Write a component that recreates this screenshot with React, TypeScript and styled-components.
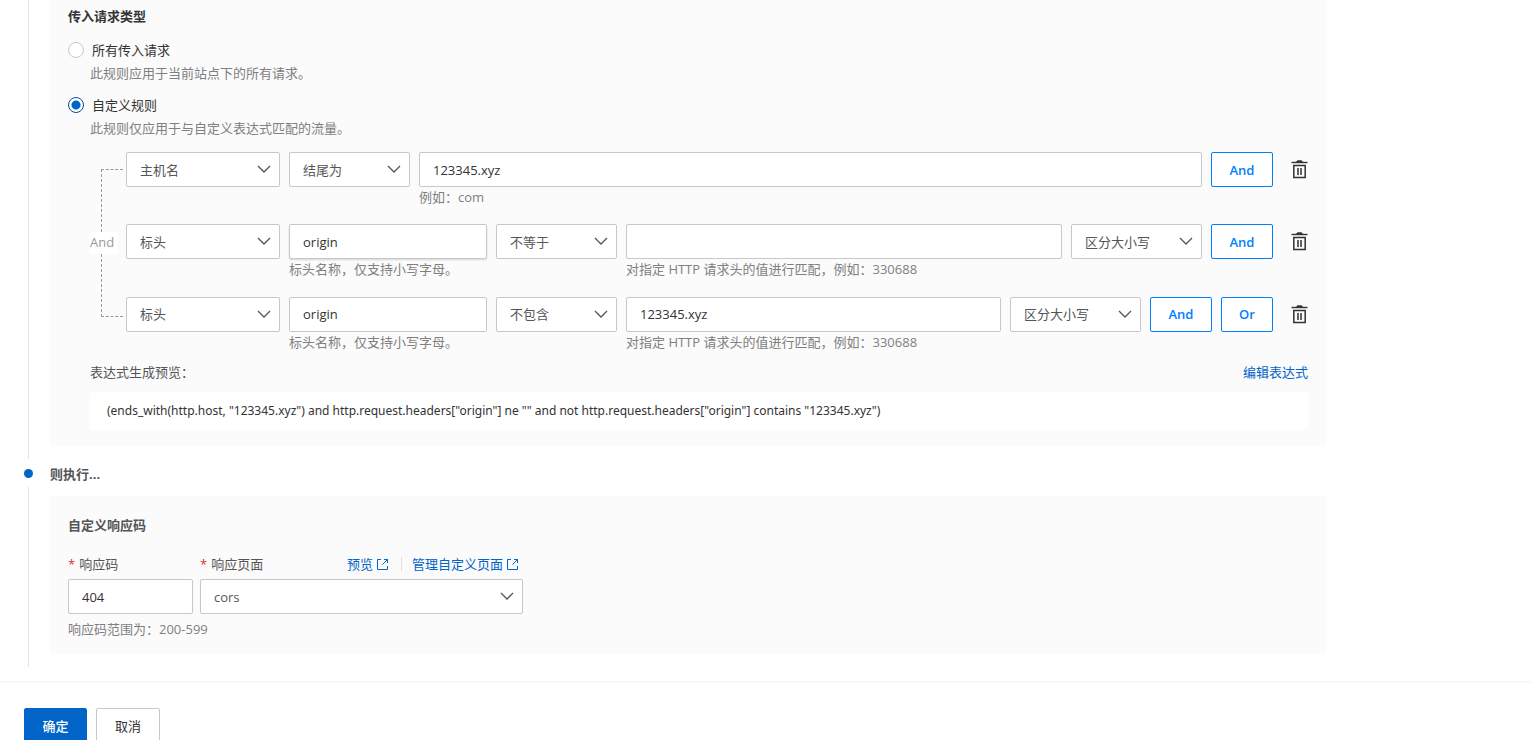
import React, { useState } from "react";
import styled, { createGlobalStyle, css } from "styled-components";

const GlobalStyle = createGlobalStyle`
  *, *::before, *::after { box-sizing: border-box; }
  html, body { margin: 0; padding: 0; background: #fff; }
  body, input, select, button {
    font-family: "Open Sans", "Noto Sans CJK SC", sans-serif;
    font-size: 13px;
    line-height: 20px;
    color: #333;
  }
  h2, h3, p { margin: 0; font-size: 13px; line-height: 20px; }
  a { color: #0064c8; text-decoration: none; }
`;

const Page = styled.main`
  height: 100vh;
  overflow: hidden;
`;

const Steps = styled.div`
  padding: 0 205px 14px 24px;
`;

const Step = styled.section`
  display: grid;
  grid-template-columns: 9px minmax(0, 1fr);
  column-gap: 17px;
`;

const Track = styled.div`
  display: flex;
  flex-direction: column;
  align-items: center;
`;

const Dot = styled.span`
  width: 9px;
  height: 9px;
  margin: 10px 0 9px;
  border-radius: 50%;
  background: #0064c8;
`;

const Line = styled.span`
  flex: 1;
  width: 1px;
  background: #e3e3e3;
`;

const StepBody = styled.div<{ $last?: boolean }>`
  padding-bottom: ${(p) => (p.$last ? "13px" : "12px")};
`;

const StepTitle = styled.h2`
  padding: 5px 0 12px;
  color: #555;
`;

const Panel = styled.div<{ $first?: boolean }>`
  padding: ${(p) => (p.$first ? "6px 18px 17px" : "19px 18px 15px")};
  border-radius: ${(p) => (p.$first ? "0 0 4px 4px" : "4px")};
  background: #fbfbfb;
`;

const PanelTitle = styled.h3<{ $soft?: boolean }>`
  color: ${(p) => (p.$soft ? "#555" : "#333")};
`;

const Option = styled.label`
  display: flex;
  align-items: center;
  gap: 8px;
`;

const OptionGroup = styled.div<{ $first?: boolean }>`
  margin-top: ${(p) => (p.$first ? "14px" : "12px")};
`;

const Radio = styled.input`
  appearance: none;
  width: 16px;
  height: 16px;
  margin: 0;
  border: 1px solid #c8c8c8;
  border-radius: 50%;
  background: #fff;
  &:checked {
    border-color: #0a4f99;
    background: radial-gradient(circle, #0064c8 4px, #fff 5px);
  }
`;

const Note = styled.p`
  color: #808080;
`;

const OptionNote = styled(Note)`
  margin: 3px 0 0 22px;
`;

const Builder = styled.div`
  display: grid;
  grid-template-columns: 36px minmax(0, 1fr);
  margin: 14px 0 0 22px;
`;

const Connector = styled.div`
  display: flex;
  flex-direction: column;
  height: 200px;
  padding: 17px 0 35px;
`;

const Bracket = styled.span<{ $side: "top" | "bottom" }>`
  flex: 1;
  width: 22px;
  margin-left: 11px;
  border-left: 1px dashed #999;
  ${(p) =>
    p.$side === "top"
      ? css`border-top: 1px dashed #999;`
      : css`border-bottom: 1px dashed #999;`}
`;

const ConnectorLabel = styled.span`
  width: 28px;
  height: 22px;
  line-height: 20px;
  background: #fff;
  color: #999;
`;

const Rules = styled.div`
  display: grid;
  grid-template-rows: repeat(3, 1fr);
  row-gap: 17px;
  height: 200px;
`;

const Rule = styled.div`
  display: flex;
  align-items: flex-start;
  gap: 9px;
`;

const Cell = styled.div<{ $width?: number }>`
  ${(p) => (p.$width ? css`flex: 0 0 ${p.$width}px;` : css`flex: 1;`)}
  min-width: 0;
`;

const control = css`
  display: block;
  width: 100%;
  height: 35px;
  margin: 0;
  padding: 0 13px;
  border: 1px solid #c8c8c8;
  border-radius: 2px;
  background: #fff;
  outline: none;
`;

const TextInput = styled.input<{ $raised?: boolean }>`
  ${control}
  ${(p) => p.$raised && css`box-shadow: 0 1px 2px #00000026;`}
`;

const SelectBox = styled.span`
  position: relative;
  display: block;
`;

const NativeSelect = styled.select`
  ${control}
  appearance: none;
  color: #555;
`;

const Arrow = styled.svg`
  position: absolute;
  right: 9px;
  top: 12px;
  pointer-events: none;
`;

const LogicButton = styled.button<{ $narrow?: boolean }>`
  flex: none;
  width: ${(p) => (p.$narrow ? "52px" : "62px")};
  height: 35px;
  padding: 0;
  border: 1px solid #0080ff;
  border-radius: 2px;
  background: #fff;
  color: #0080ff;
  font-weight: 600;
`;

const DeleteButton = styled.button`
  display: flex;
  align-items: center;
  height: 35px;
  margin-left: 9px;
  padding: 0;
  border: 0;
  background: none;
`;

const PreviewHead = styled.div`
  display: flex;
  justify-content: space-between;
  margin: 10px 0 0 22px;
  color: #555;
`;

const Expression = styled.output`
  display: block;
  margin: 10px 0 0 22px;
  padding: 9px 17px;
  border-radius: 3px;
  background: #fff;
  font-family: "Noto Sans", "Noto Sans CJK SC", sans-serif;
  font-size: 12px;
`;

const Fields = styled.div`
  display: flex;
  gap: 7px;
  margin-top: 19px;
`;

const FieldHead = styled.div`
  display: flex;
  justify-content: space-between;
  margin-bottom: 5px;
  padding-right: 4px;
  color: #555;
`;

const FieldLabel = styled.label`
  display: flex;
  gap: 4px;
`;

const Star = styled.span`
  color: #e02f2f;
`;

const Links = styled.div`
  display: flex;
  align-items: center;
`;

const IconLink = styled.a`
  display: flex;
  align-items: center;
  gap: 3px;
`;

const Divider = styled.span`
  width: 1px;
  height: 14px;
  margin: 0 10px 0 12px;
  background: #e0e0e0;
`;

const FieldNote = styled(Note)`
  margin-top: 5px;
`;

const Footer = styled.footer`
  display: flex;
  gap: 9px;
  padding: 25px 24px;
  border-top: 2px solid #f7f7f7;
`;

const ActionButton = styled.button<{ $primary?: boolean }>`
  width: ${(p) => (p.$primary ? "63px" : "64px")};
  height: 36px;
  padding: 0;
  border: 1px solid ${(p) => (p.$primary ? "#0064c8" : "#c8c8c8")};
  border-radius: 2px;
  background: ${(p) => (p.$primary ? "#0064c8" : "#fff")};
  color: ${(p) => (p.$primary ? "#fff" : "#333")};
  font-weight: ${(p) => (p.$primary ? 500 : 400)};
`;

function Select({ label, value, id }: { label?: string; value: string; id?: string }) {
  return (
    <SelectBox>
      <NativeSelect aria-label={label} id={id} defaultValue={value}>
        <option>{value}</option>
      </NativeSelect>
      <Arrow width="14" height="10" viewBox="0 0 14 10" fill="none" stroke="#555" strokeWidth="1.3" aria-hidden="true">
        <path d="M1 2 L7 8 L13 2" />
      </Arrow>
    </SelectBox>
  );
}

function Trash() {
  return (
    <DeleteButton type="button" aria-label="删除">
      <svg width="17" height="19" viewBox="0 0 17 19" fill="none" stroke="#333" aria-hidden="true">
        <path d="M5 2 L6.5 0.3 H10.5 L12 2 Z" fill="#333" stroke="none" />
        <path d="M0.5 2.5 H16.5" strokeWidth="1.4" />
        <path d="M2.8 5.6 H14.2 V17.5 H2.8 Z" strokeWidth="1.5" />
        <path d="M7 8 V15 M10 8 V15" strokeWidth="1.5" />
      </svg>
    </DeleteButton>
  );
}

function External() {
  return (
    <svg width="13" height="13" viewBox="0 0 13 13" fill="none" stroke="#0064c8" aria-hidden="true">
      <path d="M5 1.5 H1.5 V11.5 H11.5 V8" />
      <path d="M8 1.5 H11.5 V5 M11.5 1.5 L6.5 6.5" />
    </svg>
  );
}

function HeaderNameCell({ raised }: { raised?: boolean }) {
  return (
    <Cell $width={198}>
      <TextInput aria-label="标头名称" defaultValue="origin" $raised={raised} />
      <Note>标头名称，仅支持小写字母。</Note>
    </Cell>
  );
}

function HeaderValueCell({ value }: { value: string }) {
  return (
    <Cell>
      <TextInput aria-label="标头值" defaultValue={value} />
      <Note>对指定 HTTP 请求头的值进行匹配，例如：330688</Note>
    </Cell>
  );
}

export default function App() {
  const [scope, setScope] = useState("custom");

  return (
    <Page>
      <GlobalStyle />
      <Steps>
        <Step>
          <Track>
            <Line />
          </Track>
          <StepBody>
            <Panel $first>
              <PanelTitle>传入请求类型</PanelTitle>
              <OptionGroup $first>
                <Option>
                  <Radio type="radio" name="scope" checked={scope === "all"} onChange={() => setScope("all")} />
                  所有传入请求
                </Option>
                <OptionNote>此规则应用于当前站点下的所有请求。</OptionNote>
              </OptionGroup>
              <OptionGroup>
                <Option>
                  <Radio type="radio" name="scope" checked={scope === "custom"} onChange={() => setScope("custom")} />
                  自定义规则
                </Option>
                <OptionNote>此规则仅应用于与自定义表达式匹配的流量。</OptionNote>
              </OptionGroup>

              <Builder>
                <Connector>
                  <Bracket $side="top" />
                  <ConnectorLabel>And</ConnectorLabel>
                  <Bracket $side="bottom" />
                </Connector>
                <Rules>
                  <Rule>
                    <Cell $width={154}>
                      <Select label="匹配类型" value="主机名" />
                    </Cell>
                    <Cell $width={121}>
                      <Select label="运算符" value="结尾为" />
                    </Cell>
                    <Cell>
                      <TextInput aria-label="匹配值" defaultValue="123345.xyz" />
                      <Note>例如：com</Note>
                    </Cell>
                    <LogicButton type="button">And</LogicButton>
                    <Trash />
                  </Rule>
                  <Rule>
                    <Cell $width={154}>
                      <Select label="匹配类型" value="标头" />
                    </Cell>
                    <HeaderNameCell raised />
                    <Cell $width={121}>
                      <Select label="运算符" value="不等于" />
                    </Cell>
                    <HeaderValueCell value="" />
                    <Cell $width={131}>
                      <Select label="大小写" value="区分大小写" />
                    </Cell>
                    <LogicButton type="button">And</LogicButton>
                    <Trash />
                  </Rule>
                  <Rule>
                    <Cell $width={154}>
                      <Select label="匹配类型" value="标头" />
                    </Cell>
                    <HeaderNameCell />
                    <Cell $width={121}>
                      <Select label="运算符" value="不包含" />
                    </Cell>
                    <HeaderValueCell value="123345.xyz" />
                    <Cell $width={131}>
                      <Select label="大小写" value="区分大小写" />
                    </Cell>
                    <LogicButton type="button">And</LogicButton>
                    <LogicButton type="button" $narrow>Or</LogicButton>
                    <Trash />
                  </Rule>
                </Rules>
              </Builder>

              <PreviewHead>
                <span>表达式生成预览：</span>
                <a href="#edit">编辑表达式</a>
              </PreviewHead>
              <Expression>
                {'(ends_with(http.host, "123345.xyz") and http.request.headers["origin"] ne "" and not http.request.headers["origin"] contains "123345.xyz")'}
              </Expression>
            </Panel>
          </StepBody>
        </Step>

        <Step>
          <Track>
            <Dot />
            <Line />
          </Track>
          <StepBody $last>
            <StepTitle>则执行...</StepTitle>
            <Panel>
              <PanelTitle $soft>自定义响应码</PanelTitle>
              <Fields>
                <Cell $width={125}>
                  <FieldHead>
                    <FieldLabel htmlFor="code">
                      <Star>*</Star>响应码
                    </FieldLabel>
                  </FieldHead>
                  <TextInput id="code" defaultValue="404" />
                </Cell>
                <Cell $width={323}>
                  <FieldHead>
                    <FieldLabel htmlFor="page">
                      <Star>*</Star>响应页面
                    </FieldLabel>
                    <Links>
                      <IconLink href="#preview">
                        预览
                        <External />
                      </IconLink>
                      <Divider />
                      <IconLink href="#manage">
                        管理自定义页面
                        <External />
                      </IconLink>
                    </Links>
                  </FieldHead>
                  <Select id="page" value="cors" />
                </Cell>
              </Fields>
              <FieldNote>响应码范围为：200-599</FieldNote>
            </Panel>
          </StepBody>
        </Step>
      </Steps>
      <Footer>
        <ActionButton type="submit" $primary>确定</ActionButton>
        <ActionButton type="button">取消</ActionButton>
      </Footer>
    </Page>
  );
}
